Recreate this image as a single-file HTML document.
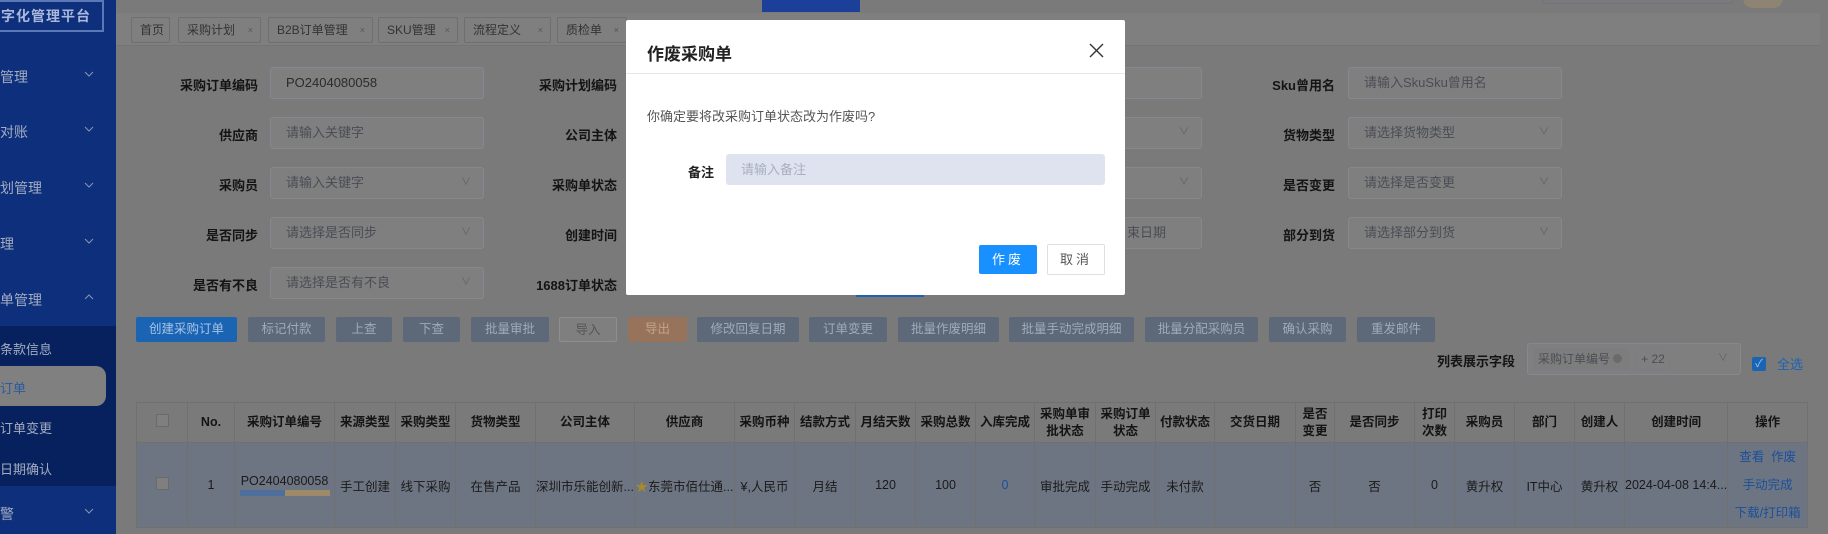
<!DOCTYPE html>
<html><head><meta charset="utf-8"><style>
*{box-sizing:border-box;margin:0;padding:0}
body{width:1828px;height:534px;overflow:hidden;background:#7a7a7a;font-family:"Liberation Sans","Noto Sans CJK SC",sans-serif;font-size:13px;color:#1b1b1b;position:relative}
.abs{position:absolute}
.sb{left:0;top:0;width:116px;height:534px;background:#0d2f7c}
.sb .it{position:absolute;left:0;width:116px;color:#a4acc0;font-size:14px}
.sb .ch{position:absolute;right:22px;top:2px}
.tabbar{left:116px;top:13px;width:1704px;height:33px;background:#7f7f7f;border-bottom:1px solid #747474}
.tab{position:absolute;top:4px;height:26px;border:1px solid #6f6f6f;border-radius:2px;background:#7f7f7f;color:#333;font-size:12px;line-height:24px;padding-left:8px}
.tab i{font-style:normal;font-size:9px;color:#555;position:absolute;right:7px}
.lbl{position:absolute;width:130px;text-align:right;font-weight:bold;font-size:13px;color:#141414}
.inp{position:absolute;height:32px;border:1px solid #858891;border-radius:3px;background:#7f7f7f;color:#4a4d55;font-size:13px;line-height:30px;padding-left:15px}
.inp.v{color:#2b2b2b}
.inp .ar{position:absolute;right:12px;top:0;font-size:10px;color:#5d6068}
.btn{position:absolute;top:317px;height:25px;border-radius:2px;background:#5d6879;color:#a2aab6;font-size:12.5px;line-height:25px;text-align:center}
table{position:absolute;left:136px;top:402px;border-collapse:collapse;table-layout:fixed}
td,th{border:1px solid #707070;text-align:center;font-size:12.5px;overflow:hidden;white-space:nowrap}
th{height:40px;background:#7a7a7a;color:#141414;font-weight:bold;line-height:17px;white-space:normal;word-break:break-all}
td{height:85px;background:#6e7582;color:#1a1a1a}
.dlg{left:626px;top:20px;width:499px;height:275px;background:#fff;border-radius:2px}
</style></head><body>
<div class="abs sb">
 <div class="abs" style="left:-2px;top:0;width:106px;height:32px;border:2px solid #5a78b8;color:#a9b8dc;font-weight:bold;font-size:14px;line-height:28px;padding-left:1px;letter-spacing:1px;white-space:nowrap;overflow:hidden">字化管理平台</div>
 <div class="it" style="top:67px">管理<svg class="ch" width="10" height="10"><path d="M1 3L5 7L9 3" stroke="#8a95b0" fill="none"/></svg></div>
 <div class="it" style="top:122px">对账<svg class="ch" width="10" height="10"><path d="M1 3L5 7L9 3" stroke="#8a95b0" fill="none"/></svg></div>
 <div class="it" style="top:178px">划管理<svg class="ch" width="10" height="10"><path d="M1 3L5 7L9 3" stroke="#8a95b0" fill="none"/></svg></div>
 <div class="it" style="top:234px">理<svg class="ch" width="10" height="10"><path d="M1 3L5 7L9 3" stroke="#8a95b0" fill="none"/></svg></div>
 <div class="it" style="top:290px">单管理<svg class="ch" width="10" height="10"><path d="M1 7L5 3L9 7" stroke="#8a95b0" fill="none"/></svg></div>
 <div class="abs" style="left:0;top:326px;width:116px;height:160px;background:#06215e"></div>
 <div class="it" style="top:339px;font-size:13px">条款信息</div>
 <div class="abs" style="left:0;top:366px;width:106px;height:40px;background:#808080;border-radius:0 10px 10px 0"></div>
 <div class="it" style="top:378px;font-size:13px;color:#2a5aa0">订单</div>
 <div class="it" style="top:418px;font-size:13px">订单变更</div>
 <div class="it" style="top:459px;font-size:13px">日期确认</div>
 <div class="it" style="top:504px">警<svg class="ch" width="10" height="10"><path d="M1 3L5 7L9 3" stroke="#8a95b0" fill="none"/></svg></div>
</div>
<div class="abs" style="left:762px;top:0;width:98px;height:12px;background:#1c3f9a"></div>
<div class="abs" style="left:1542px;top:-4px;width:192px;height:8px;border:1px solid #6e7380;border-radius:4px"></div>
<div class="abs" style="left:1743px;top:-6px;width:40px;height:14px;background:#8f8474;border-radius:0 0 10px 10px"></div>
<div class="abs tabbar">
 <div class="tab" style="left:15px;width:39px">首页</div>
 <div class="tab" style="left:62px;width:83px">采购计划<i>×</i></div>
 <div class="tab" style="left:152px;width:105px">B2B订单管理<i>×</i></div>
 <div class="tab" style="left:262px;width:80px">SKU管理<i>×</i></div>
 <div class="tab" style="left:348px;width:87px">流程定义<i>×</i></div>
 <div class="tab" style="left:441px;width:70px">质检单<i>×</i></div>
</div>
<div class="lbl" style="left:128px;top:75px">采购订单编码</div><div class="inp v" style="left:270px;top:67px;width:214px">PO2404080058</div>
<div class="lbl" style="left:487px;top:75px">采购计划编码</div><div class="inp" style="left:631px;top:67px;width:571px"></div>
<div class="lbl" style="left:1205px;top:75px">Sku曾用名</div><div class="inp" style="left:1348px;top:67px;width:214px">请输入SkuSku曾用名</div>
<div class="lbl" style="left:128px;top:125px">供应商</div><div class="inp" style="left:270px;top:117px;width:214px">请输入关键字</div>
<div class="lbl" style="left:487px;top:125px">公司主体</div><div class="inp" style="left:631px;top:117px;width:571px"><span class="ar">∨</span></div>
<div class="lbl" style="left:1205px;top:125px">货物类型</div><div class="inp" style="left:1348px;top:117px;width:214px">请选择货物类型<span class="ar">∨</span></div>
<div class="lbl" style="left:128px;top:175px">采购员</div><div class="inp" style="left:270px;top:167px;width:214px">请输入关键字<span class="ar">∨</span></div>
<div class="lbl" style="left:487px;top:175px">采购单状态</div><div class="inp" style="left:631px;top:167px;width:571px"><span class="ar">∨</span></div>
<div class="lbl" style="left:1205px;top:175px">是否变更</div><div class="inp" style="left:1348px;top:167px;width:214px">请选择是否变更<span class="ar">∨</span></div>
<div class="lbl" style="left:128px;top:225px">是否同步</div><div class="inp" style="left:270px;top:217px;width:214px">请选择是否同步<span class="ar">∨</span></div>
<div class="lbl" style="left:487px;top:225px">创建时间</div><div class="inp" style="left:631px;top:217px;width:571px;padding-left:495px">束日期</div>
<div class="lbl" style="left:1205px;top:225px">部分到货</div><div class="inp" style="left:1348px;top:217px;width:214px">请选择部分到货<span class="ar">∨</span></div>
<div class="lbl" style="left:128px;top:275px">是否有不良</div><div class="inp" style="left:270px;top:267px;width:214px">请选择是否有不良<span class="ar">∨</span></div>
<div class="lbl" style="left:487px;top:275px">1688订单状态</div>
<div class="abs" style="left:856px;top:290px;width:68px;height:7px;background:#1a64b3"></div>
<div class="btn" style="left:136px;width:101px;background:#1a64b3;color:#a8c4e6">创建采购订单</div>
<div class="btn" style="left:248px;width:77px">标记付款</div>
<div class="btn" style="left:336px;width:56px">上查</div>
<div class="btn" style="left:403px;width:57px">下查</div>
<div class="btn" style="left:471px;width:78px">批量审批</div>
<div class="btn" style="left:559px;width:58px;background:#7f7f7f;border:1px solid #8e8e8e;color:#555">导入</div>
<div class="btn" style="left:628px;width:59px;background:#96735a;color:#c0a48c">导出</div>
<div class="btn" style="left:697px;width:102px">修改回复日期</div>
<div class="btn" style="left:809px;width:78px">订单变更</div>
<div class="btn" style="left:898px;width:101px">批量作废明细</div>
<div class="btn" style="left:1009px;width:125px">批量手动完成明细</div>
<div class="btn" style="left:1145px;width:113px">批量分配采购员</div>
<div class="btn" style="left:1269px;width:77px">确认采购</div>
<div class="btn" style="left:1357px;width:78px">重发邮件</div>
<div class="lbl" style="left:1385px;top:351px">列表展示字段</div>
<div class="inp" style="left:1527px;top:343px;width:214px;padding-left:5px">
 <span class="abs" style="left:5px;top:4px;height:22px;width:96px;border:1px solid #7a7d85;background:#7d7d7d;font-size:12px;line-height:20px;padding-left:4px">采购订单编号 <span style="display:inline-block;width:9px;height:9px;border-radius:50%;background:#6a6a6a"></span></span>
 <span class="abs" style="left:108px;top:4px;height:22px;width:34px;border:1px solid #7a7d85;font-size:12px;line-height:20px;text-align:center">+ 22</span><span class="ar">∨</span></div>
<div class="abs" style="left:1752px;top:357px;width:14px;height:14px;background:#1a64b3;border-radius:2px;color:#a8c4e6;font-size:11px;line-height:14px;text-align:center">✓</div>
<div class="abs" style="left:1777px;top:354px;color:#1a64b3;font-size:13px">全选</div>
<table>
<colgroup><col style="width:51px"><col style="width:47px"><col style="width:100px"><col style="width:61px"><col style="width:60px"><col style="width:80px"><col style="width:99px"><col style="width:100px"><col style="width:60px"><col style="width:61px"><col style="width:60px"><col style="width:60px"><col style="width:59px"><col style="width:61px"><col style="width:60px"><col style="width:59px"><col style="width:81px"><col style="width:39px"><col style="width:80px"><col style="width:40px"><col style="width:60px"><col style="width:60px"><col style="width:50px"><col style="width:94px"><col style="width:80px"></colgroup>
<tr><th><span style="display:inline-block;width:13px;height:13px;border:1px solid #6a6a6a;background:#7f7f7f"></span></th><th>No.</th><th>采购订单编号</th><th>来源类型</th><th>采购类型</th><th>货物类型</th><th>公司主体</th><th>供应商</th><th>采购币种</th><th>结款方式</th><th>月结天数</th><th>采购总数</th><th>入库完成</th><th>采购单审批状态</th><th>采购订单状态</th><th>付款状态</th><th>交货日期</th><th>是否<br>变更</th><th>是否同步</th><th>打印<br>次数</th><th>采购员</th><th>部门</th><th>创建人</th><th>创建时间</th><th>操作</th></tr>
<tr><td><span style="display:inline-block;width:13px;height:13px;border:1px solid #6a6a6a;background:#7f7f7f"></span></td><td>1</td><td>PO2404080058<div style="margin:2px auto 0;width:90px;height:6px;background:linear-gradient(90deg,#4e6f9c 50%,#9c8a68 50%)"></div></td><td>手工创建</td><td>线下采购</td><td>在售产品</td><td>深圳市乐能创新...</td><td><span style="color:#a88a2a">★</span>东莞市佰仕通...</td><td>¥,人民币</td><td>月结</td><td>120</td><td>100</td><td style="color:#1a4f9a">0</td><td>审批完成</td><td>手动完成</td><td>未付款</td><td></td><td>否</td><td>否</td><td>0</td><td>黄升权</td><td>IT中心</td><td>黄升权</td><td>2024-04-08 14:4...</td><td style="color:#1a4f9a;line-height:28px">查看&nbsp; 作废<br>手动完成<br>下载/打印箱</td></tr>
</table>
<div class="abs dlg">
 <div class="abs" style="left:21px;top:20px;font-size:17px;font-weight:bold;color:#222">作废采购单</div>
 <svg class="abs" style="left:463px;top:23px" width="15" height="15"><path d="M1 1L14 14M14 1L1 14" stroke="#333" stroke-width="1.4"/></svg>
 <div class="abs" style="left:0;top:53px;width:499px;height:1px;background:#e4e7ee"></div>
 <div class="abs" style="left:21px;top:86px;font-size:13px;color:#555">你确定要将改采购订单状态改为作废吗?</div>
 <div class="abs" style="left:62px;top:142px;font-size:13px;font-weight:bold;color:#222">备注</div>
 <div class="abs" style="left:100px;top:134px;width:379px;height:31px;background:#dfe3f0;border-radius:3px;color:#a9afbf;font-size:13px;line-height:31px;padding-left:15px">请输入备注</div>
 <div class="abs" style="left:353px;top:225px;width:58px;height:29px;background:#1890ff;border-radius:2px;color:#fff;text-align:center;line-height:29px;font-size:13px;letter-spacing:3px">作废</div>
 <div class="abs" style="left:421px;top:224px;width:58px;height:31px;border:1px solid #dcdfe6;border-radius:2px;color:#555;text-align:center;line-height:29px;font-size:13px;letter-spacing:3px">取消</div>
</div>
</body></html>
